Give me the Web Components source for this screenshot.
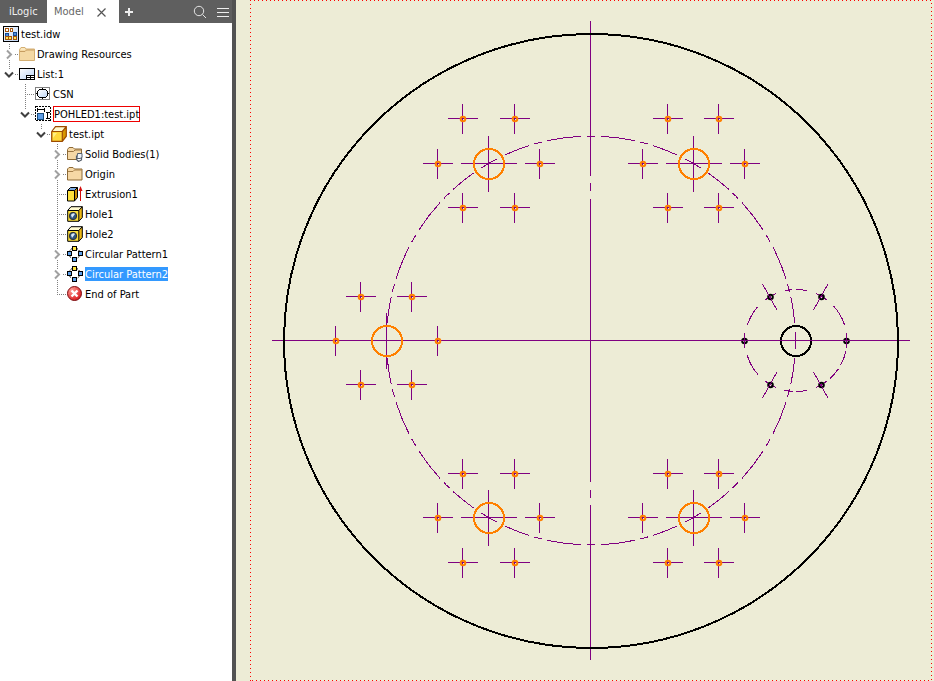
<!DOCTYPE html>
<html lang="en">
<head>
<meta charset="utf-8">
<title>test.idw</title>
<style>
html, body { margin: 0; height: 100%; }
body { font: 11px/14px "DejaVu Sans Condensed", "DejaVu Sans", sans-serif; color: #000; }
</style>
</head>
<body>
<cad-workspace>
  <browser-panel slot="panel">
    <tree-node label="test.idw" icon="document">
      <tree-node label="Drawing Resources" icon="folder" state="closed"></tree-node>
      <tree-node label="List:1" icon="sheet" state="open">
        <tree-node label="CSN" icon="border"></tree-node>
        <tree-node label="POHLED1:test.ipt" icon="view" state="open" boxed>
          <tree-node label="test.ipt" icon="part" state="open">
            <tree-node label="Solid Bodies(1)" icon="bodies" state="closed"></tree-node>
            <tree-node label="Origin" icon="origin" state="closed"></tree-node>
            <tree-node label="Extrusion1" icon="extrusion"></tree-node>
            <tree-node label="Hole1" icon="hole"></tree-node>
            <tree-node label="Hole2" icon="hole"></tree-node>
            <tree-node label="Circular Pattern1" icon="pattern" state="closed"></tree-node>
            <tree-node label="Circular Pattern2" icon="pattern" state="closed" selected></tree-node>
            <tree-node label="End of Part" icon="end"></tree-node>
          </tree-node>
        </tree-node>
      </tree-node>
    </tree-node>
  </browser-panel>
  <drawing-sheet slot="sheet"></drawing-sheet>
</cad-workspace>

<script>
const ICONS = {
  document: `<defs><linearGradient id="g" x2="1" y2="1"><stop stop-color="#fff"/><stop offset="1" stop-color="#b9d2f4"/></linearGradient></defs>
    <g shape-rendering="crispEdges"><rect x=".5" y=".5" width="15" height="15" fill="url(#g)" stroke="#000"/>
    <path d="M2 2h4v4H2zM7 2h3v4H7z" fill="#a4550c"/><path d="M3 3h2v2H3zM8 3h1v2H8z" fill="#fff"/>
    <path d="M2 7h4v7H2zM10 6h4v4h-4z" fill="#174b91"/><path d="M3 8h2v2H3zM11 7h2v2h-2z" fill="#4d8be0"/>
    <path d="M2 10h7v4H2zM10 10h4v4h-4z" fill="#a4550c"/><path d="M3 11h2v2H3zM6 11h2v2H6zM11 11h2v2h-2z" fill="#ffe45c"/></g>`,
  folder: `<path d="M.5 3.500 2 1.500h4l1 1.500h8.500v11.500H.5z" fill="#f4d9a4" stroke="#d4af72"/><path d="M1 5.500h5l1.500-1.500H15" fill="none" stroke="#c69d60"/><path d="M2 3h4" stroke="#fff4d9"/>`,
  sheet: `<defs><linearGradient id="g" x2="1" y2="1"><stop stop-color="#fff"/><stop offset="1" stop-color="#b9d2f4"/></linearGradient></defs>
    <g shape-rendering="crispEdges"><rect x=".5" y="2.500" width="15" height="11" fill="url(#g)" stroke="#000"/><path d="M7 9h8v4H7z" fill="#fff"/><path d="M7 9.500h9M7 11.500h9M7.500 9v5M11.500 9v2M11.500 12v2" stroke="#000"/></g>`,
  border: `<defs><linearGradient id="g" x2="1" y2="1"><stop stop-color="#fff"/><stop offset="1" stop-color="#c0d8f6"/></linearGradient></defs>
    <g shape-rendering="crispEdges"><rect x=".5" y="1.500" width="14" height="12" fill="#fff" stroke="#808080"/><path d="M3 4h9v7H3z" fill="url(#g)"/><path d="M4 3.500h7M4 11.500h7M2.500 5v5M12.500 5v5" stroke="#000"/><path d="M3 4h1v1H3zM11 4h1v1h-1zM3 10h1v1H3zM11 10h1v1h-1zM1 7h2v1H1zM13 7h1v1h-1zM7 2h1v2H7zM7 11h1v2H7z" fill="#000"/></g>`,
  view: `<g shape-rendering="crispEdges" fill="none" stroke="#000"><rect x=".5" y=".5" width="15" height="14" stroke-dasharray="2 1"/><path d="M2.500 2v4M9.500 2v4M3 3.500h6M11 6.500h4M11 12.500h4M12.500 7v5"/><rect x="2.500" y="7.500" width="6" height="6" fill="#5e9de6" stroke="#174b7a"/></g>`,
  part: `<path d="M.7 5.500 4.500.7h10.800l-4 4.800z" fill="#fffbd0"/><path d="M11.300 5.500l4-4.800v9.500l-4 5.100z" fill="#d89800"/><path d="M.7 5.500h10.600v9.800H.7z" fill="#ffd83b"/><path d="M2 7h4L2 12z" fill="#fff085"/><path d="M.7 5.500 4.500.7h10.800v9.500l-4 5.100H.7zh10.600v9.800M11.300 5.500l4-4.800" fill="none" stroke="#9c4b00" stroke-width="1.200"/>`,
  bodies: `<path d="M.5 13.500V3.500L2 1.500h4l1.500 1.500h7v8h-4v2.500z" fill="#f6d8a5" stroke="#8d6a37"/><path d="M1 5.500h5.500L8 4h6" fill="none" stroke="#9a7440"/><path d="M9.500 9.500v4l2 2 3-1.500V10" fill="#fff" stroke="#565f6b" stroke-width="1.200"/><path d="M10.500 7.500h4.500v4l-2 1h-3z" fill="#eef2f8" stroke="#565f6b"/>`,
  origin: `<path d="M.5 14V3L2 1.500h4L7.500 3h7.500v11z" fill="#f6d8a5" stroke="#8d6a37"/><path d="M1 5.500h5L7.500 4H15" fill="none" stroke="#a6804b"/>`,
  extrusion: `<path d="M.5 4.500 3.500 1.500h7l-3 3z" fill="#79a8e0"/><path d="M7.500 4.500l3-3v10l-3 3.500z" fill="#c98c00"/><path d="M.5 4.500h7V15h-7z" fill="#ffe13d"/><path d="M.5 4.500 3.500 1.500h7v10l-3 3.500h-7zh7V15M7.500 4.500l3-3" fill="none" stroke="#000"/><path d="M13.500 15V4" stroke="#d30b0b"/><path d="M13.500 0 11.500 5h4z" fill="#d30b0b"/>`,
  hole: `<path d="M.7 4.500 4 .7h11.300l-3.500 3.800z" fill="#fffbd0"/><path d="M11.800 4.500l3.500-3.800v10.800l-3.500 3.800z" fill="#edb814"/><path d="M.7 4.500h11.100v10.800H.7z" fill="#ffe13d"/><path d="M.7 4.500 4 .7h11.300v10.800l-3.500 3.800H.7zh11.100v10.800M11.800 4.500l3.500-3.800" fill="none" stroke="#000"/><circle cx="6" cy="10" r="3.700" fill="#31557e" stroke="#333"/><path d="M4 9a2.500 2.500 0 0 1 4-1L5 12z" fill="#dceaf8"/>`,
  pattern: `<circle cx="7.500" cy="7.500" r="5.500" fill="none" stroke="#000" stroke-dasharray="2 1"/><g stroke="#000" shape-rendering="crispEdges"><rect x="5.500" y=".5" width="4" height="4" fill="#ffe43d"/><rect x=".5" y="5.500" width="4" height="4" fill="#5d9fe8"/><rect x="11.500" y="5.500" width="4" height="4" fill="#5d9fe8"/><rect x="5.500" y="11.500" width="4" height="4" fill="#5d9fe8"/></g>`,
  end: `<defs><radialGradient id="r" cx=".3" cy=".25" r=".8"><stop stop-color="#ff9d95"/><stop offset="1" stop-color="#d91c20"/></radialGradient></defs><circle cx="7.500" cy="7.500" r="7" fill="url(#r)" stroke="#7b0c10"/><path d="M4.500 4.500l6 6M10.500 4.500l-6 6" stroke="#fff" stroke-width="2.400"/>`
};

class NodeIcon extends HTMLElement {
  connectedCallback() {
    this.attachShadow({ mode: 'open' }).innerHTML = `<style>:host{display:block;flex:none;width:16px;height:16px}svg{display:block}</style>
      <svg width="16" height="16" viewBox="0 0 16 16" aria-hidden="true">${ICONS[this.getAttribute('name')]}</svg>`;
  }
}
customElements.define('node-icon', NodeIcon);

class TreeNode extends HTMLElement {
  connectedCallback() {
    const root = this.attachShadow({ mode: 'open' });
    let level = 0;
    for (let p = this.parentElement; p && p.localName === 'tree-node'; p = p.parentElement) level++;
    const state = this.getAttribute('state');
    const last = this.parentElement.lastElementChild === this;
    this.setAttribute('role', 'treeitem');
    const vertical = state
      ? `M6.500 0v5${last ? '' : 'M6.500 16v4'}`
      : `M6.500 0v${last ? 11 : 20}`;
    const chevron = state === 'open'
      ? '<path d="M2 8.500l4 4 4-4" stroke="#404040" stroke-width="2" fill="none"/>'
      : '<path d="M4 6.500l4 4-4 4" stroke="#a0a0a0" stroke-width="2" fill="none"/>';
    const guide = level ? `<svg width="16" height="20" viewBox="0 0 16 20" aria-hidden="true">
        <path d="${vertical}M${state ? 12 : 6} 10.500H16" stroke="#808080" stroke-dasharray="1 1" shape-rendering="crispEdges"/>${state ? chevron : ''}</svg>` : '';
    root.innerHTML = `<style>
      :host { display: block; }
      .row { display: flex; align-items: center; height: 20px; padding-left: calc(3px + 16px * ${Math.max(level - 1, 0)}); white-space: nowrap; }
      svg, button { display: block; flex: none; }
      button { border: 0; padding: 0; background: none; }
      .label { margin-left: 2px; padding-top: 2px; line-height: 12px; }
      :host([selected]) .label { background: #3399ff; color: #fff; }
      :host([boxed]) .label { border: 1px solid #e00; }
    </style>
    <div class="row">${state ? `<button aria-label="Toggle ${this.getAttribute('label')}">${guide}</button>` : guide}<node-icon name="${this.getAttribute('icon')}"></node-icon><span class="label"></span></div>
    <slot></slot>`;
    root.querySelector('.label').textContent = this.getAttribute('label');
  }
}

class BrowserPanel extends HTMLElement {
  connectedCallback() {
    this.attachShadow({ mode: 'open' }).innerHTML = `<style>
      :host { display: block; background: #fff; }
      header { display: flex; height: 23px; background: #5f5f5f; }
      button { font: inherit; border: 0; margin: 0; padding: 0; background: none; color: #f0f0f0; display: flex; align-items: center; }
      svg { display: block; }
      .tab { padding: 0 9px; width: 47px; }
      .active { background: #fff; display: flex; align-items: center; width: 72px; box-sizing: border-box; padding: 0 12px 0 7px; justify-content: space-between; }
      .active button { color: #666; }
      .add { padding: 0 5px; }
      .tools { display: flex; gap: 10px; margin-left: auto; padding-right: 2px; }
      .tree { padding-top: 1px; }
    </style>
    <header>
      <button class="tab">iLogic</button>
      <div class="active"><button>Model</button><button aria-label="Close"><svg width="11" height="11" viewBox="0 0 11 11"><path d="M1.500 2.500l8 8M9.500 2.500l-8 8" stroke="#555" stroke-width="1.200"/></svg></button></div>
      <button class="add" aria-label="Add"><svg width="10" height="10" viewBox="0 0 10 10"><path d="M5 1v8M1 5h8" stroke="#eee" stroke-width="2"/></svg></button>
      <div class="tools">
        <button aria-label="Search"><svg width="14" height="14" viewBox="0 0 14 14" fill="none" stroke="#e4e4e4"><circle cx="6" cy="6" r="4.700"/><path d="M9.500 9.500l3.500 3.500"/></svg></button>
        <button aria-label="Menu"><svg width="13" height="10" viewBox="0 0 13 10" shape-rendering="crispEdges"><path d="M0 1.500h12M0 5.500h12M0 9.500h12" stroke="#eee"/></svg></button>
      </div>
    </header>
    <div class="tree" role="tree"><slot></slot></div>`;
  }
}

class DrawingSheet extends HTMLElement {
  connectedCallback() {
    const cross = (x, y, h) => `M${x - h} ${y}H${x + h}M${x} ${y - h}V${y + h}`;
    const columns = [[488.5, 462.5, 514.5, 437.5, 539.5], [693.5, 667.5, 718.5, 642.5, 744.5]];
    const groups = [
      ...columns.map(c => [c, 163.5, 118.5, 207.5]),
      ...columns.map(c => [c, 517.5, 473.5, 562.5]),
      [[386.5, 360.5, 411.5, 335.5, 437.5], 340.5, 296.5, 384.5]
    ];
    let marks = '', rings = '', dots = '';
    for (const [[cx, l, r, ll, rr], cy, t, b] of groups) {
      marks += cross(cx, cy, 28);
      rings += `<circle cx="${cx + .5}" cy="${cy + .5}" r="15"/>`;
      for (const [x, y] of [[l, t], [r, t], [l, b], [r, b], [ll, cy], [rr, cy]]) {
        marks += cross(x, y, 15);
        dots += `<circle cx="${x + .5}" cy="${y + .5}" r="2.300"/>`;
      }
    }
    const bolts = [[770, 297, 60], [821, 297, -60], [770, 385, -60], [821, 385, 60], [744, 341, 0], [846, 341, 0]];
    const radial = { 60: 'M-7.500-13L7 13', '-60': 'M7-13L-7.500 13', 0: 'M.5-8V7' };
    this.attachShadow({ mode: 'open' }).innerHTML = `<style>
      :host { display: block; background: #edecd6; min-width: 0; overflow: hidden; }
      svg { display: block; width: 100%; height: 100%; }
    </style>
    <svg viewBox="236 0 698 681" fill="none" shape-rendering="crispEdges" role="img" aria-label="Flange drawing">
      <g stroke="#f00" stroke-dasharray="1 3">
        <path d="M250 .5H932M250.500 0V681M931.500 3V681M252 680.500H932"/>
      </g>
      <g stroke="#800080">
        <path d="M272 340.500H910M590.500 21V176M590.500 183V191M590.500 199V482M590.500 490V498M590.500 505V660"/>
        <circle cx="591" cy="340.500" r="204.500" pathLength="1284" stroke-dasharray="18 9 26 5 8 6 34 6 8 6 34 6 8 5 26 9" stroke-dashoffset="9"/>
        <path d="${marks}"/>
        <circle cx="796" cy="340.500" r="51" pathLength="360" stroke-dasharray="0 12 17 5 14 5 14 11 12 3 10 10 14 11 25 35 23 12 14 11 7 5 13 10 14 10 25 18"/>
      </g>
      <g stroke="#000" stroke-width="2">
        <circle cx="591" cy="341" r="307"/><circle cx="796" cy="341" r="15"/>
        <g shape-rendering="auto">${bolts.map(([x, y]) => `<circle cx="${x + .5}" cy="${y}" r="2.300"/>`).join('')}</g>
      </g>
      <g stroke="#800080">
        ${bolts.map(([x, y, a]) => `<path transform="translate(${x} ${y})" d="${radial[a]}"/>`).join('')}
        <path d="M780 340.500H812M740 340.500H749M842 340.500H851"/>
      </g>
      <g stroke="#ff8000" stroke-width="2">${rings}<g shape-rendering="auto">${dots}</g></g>
    </svg>`;
  }
}

class CadWorkspace extends HTMLElement {
  connectedCallback() {
    this.attachShadow({ mode: 'open' }).innerHTML = `<style>
      :host { display: grid; grid-template-columns: 232px 4px minmax(0, 1fr); grid-template-rows: minmax(0, 1fr); height: 100vh; }
      .splitter { background: #525252; }
    </style>
    <slot name="panel"></slot><div class="splitter"></div><slot name="sheet"></slot>`;
  }
}
customElements.define('tree-node', TreeNode);
customElements.define('browser-panel', BrowserPanel);
customElements.define('drawing-sheet', DrawingSheet);
customElements.define('cad-workspace', CadWorkspace);
</script>
</body>
</html>
